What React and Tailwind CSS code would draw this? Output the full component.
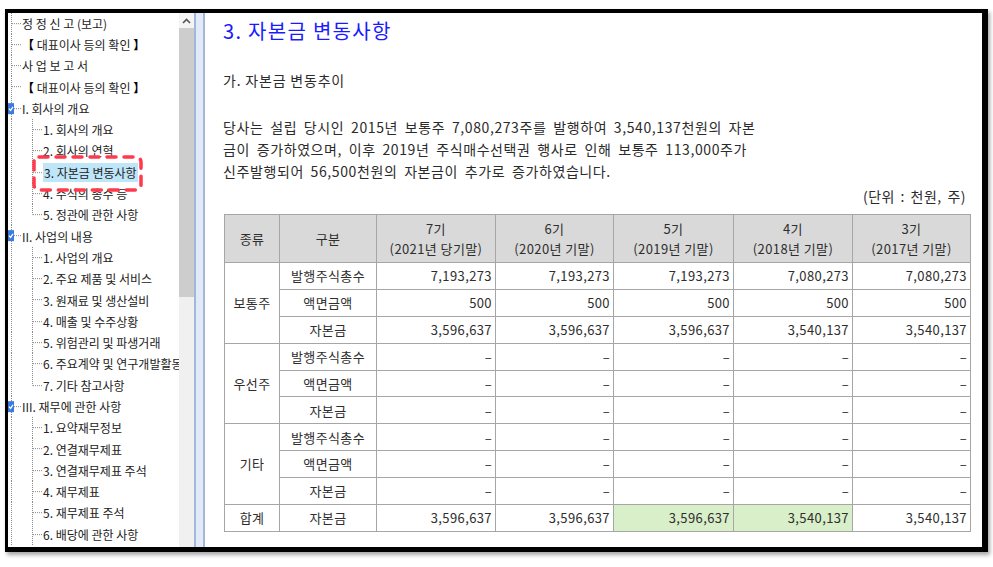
import React from 'react';

const FONT = '"Noto Sans CJK KR", "Noto Sans", sans-serif';

const tree = [
  { t: '정 정 신 고 (보고)', lv: 0 },
  { t: '대표이사 등의 확인', lv: 0, br: true },
  { t: '사 업 보 고 서', lv: 0 },
  { t: '대표이사 등의 확인', lv: 0, br: true },
  { t: 'I. 회사의 개요', lv: 0, chk: true },
  { t: '1. 회사의 개요', lv: 1 },
  { t: '2. 회사의 연혁', lv: 1 },
  { t: '3. 자본금 변동사항', lv: 1, sel: true },
  { t: '4. 주식의 총수 등', lv: 1 },
  { t: '5. 정관에 관한 사항', lv: 1, last: true },
  { t: 'II. 사업의 내용', lv: 0, chk: true },
  { t: '1. 사업의 개요', lv: 1 },
  { t: '2. 주요 제품 및 서비스', lv: 1 },
  { t: '3. 원재료 및 생산설비', lv: 1 },
  { t: '4. 매출 및 수주상황', lv: 1 },
  { t: '5. 위험관리 및 파생거래', lv: 1 },
  { t: '6. 주요계약 및 연구개발활동', lv: 1 },
  { t: '7. 기타 참고사항', lv: 1, last: true },
  { t: 'III. 재무에 관한 사항', lv: 0, chk: true },
  { t: '1. 요약재무정보', lv: 1 },
  { t: '2. 연결재무제표', lv: 1 },
  { t: '3. 연결재무제표 주석', lv: 1 },
  { t: '4. 재무제표', lv: 1 },
  { t: '5. 재무제표 주석', lv: 1 },
  { t: '6. 배당에 관한 사항', lv: 1 },
];

const ROW_H = 21.3;

function TreeRow({ item }) {
  const mid = ROW_H / 2;
  const w = item.lv ? 35 : 14;
  return (
    <div className="flex h-[21.3px] items-center whitespace-nowrap">
      <svg width={w} height={ROW_H} className="shrink-0">
        <g stroke="#8a8a8a" strokeWidth="1" strokeDasharray="1 1" fill="none">
          <line x1="3.5" y1="0" x2="3.5" y2={ROW_H} />
          {item.lv === 0 && <line x1="4" y1={mid} x2="14" y2={mid} />}
          {item.lv === 1 && (
            <>
              <line x1="24.5" y1="0" x2="24.5" y2={item.last ? mid : ROW_H} />
              <line x1="25" y1={mid} x2="35" y2={mid} />
            </>
          )}
        </g>
        {item.chk && (
          <g>
            <rect x="0" y={mid - 5.5} width="6" height="11" fill="#3b7be0" />
            <path d={`M1 ${mid} L2.6 ${mid + 1.8} L5 ${mid - 1.8}`} stroke="#fff" strokeWidth="1.2" fill="none" />
          </g>
        )}
      </svg>
      <span
        className={
          item.sel
            ? 'bg-[#bfe5f9] px-[1px] leading-[19px] text-[12px] text-[#222]'
            : 'text-[12px] leading-[19px] text-[#222]'
        }
      >
        {item.br ? (
          <>
            <b className="text-black">【</b> {item.t} <b className="text-black">】</b>
          </>
        ) : (
          item.t
        )}
      </span>
    </div>
  );
}

const periods = [
  ['7기', '(2021년 당기말)'],
  ['6기', '(2020년 기말)'],
  ['5기', '(2019년 기말)'],
  ['4기', '(2018년 기말)'],
  ['3기', '(2017년 기말)'],
];

const dash = ['–', '–', '–', '–', '–'];

const groups = [
  {
    name: '보통주',
    rows: [
      ['발행주식총수', ['7,193,273', '7,193,273', '7,193,273', '7,080,273', '7,080,273']],
      ['액면금액', ['500', '500', '500', '500', '500']],
      ['자본금', ['3,596,637', '3,596,637', '3,596,637', '3,540,137', '3,540,137']],
    ],
  },
  {
    name: '우선주',
    rows: [
      ['발행주식총수', dash],
      ['액면금액', dash],
      ['자본금', dash],
    ],
  },
  {
    name: '기타',
    rows: [
      ['발행주식총수', dash],
      ['액면금액', dash],
      ['자본금', dash],
    ],
  },
];

const totals = ['3,596,637', '3,596,637', '3,596,637', '3,540,137', '3,540,137'];

const td = 'border border-[#a6a6a6] px-[3px] text-[13px] tracking-[0.4px] text-[#2e2e2e]';

function CapitalTable() {
  return (
    <table className="w-[746px] table-fixed border-collapse border border-[#6f6f6f]">
      <colgroup>
        <col className="w-[55px]" />
        <col className="w-[97px]" />
        <col className="w-[119px]" />
        <col className="w-[118px]" />
        <col className="w-[120px]" />
        <col className="w-[119px]" />
        <col className="w-[118px]" />
      </colgroup>
      <thead>
        <tr className="h-[48px] bg-[#d9d9d9]">
          <th className={`${td} text-center font-normal`}>종류</th>
          <th className={`${td} text-center font-normal`}>구분</th>
          {periods.map(([a, b]) => (
            <th key={a} className={`${td} text-center font-normal leading-[20px]`}>
              {a}
              <br />
              {b}
            </th>
          ))}
        </tr>
      </thead>
      <tbody>
        {groups.map((g) =>
          g.rows.map(([label, vals], i) => (
            <tr key={g.name + i} className="h-[26.9px]">
              {i === 0 && (
                <td rowSpan={3} className={`${td} text-center`}>
                  {g.name}
                </td>
              )}
              <td className={`${td} text-center`}>{label}</td>
              {vals.map((v, j) => (
                <td key={j} className={`${td} text-right`}>
                  {v}
                </td>
              ))}
            </tr>
          ))
        )}
        <tr className="h-[26.9px]">
          <td className={`${td} text-center`}>합계</td>
          <td className={`${td} text-center`}>자본금</td>
          {totals.map((v, j) => (
            <td key={j} className={`${td} text-right ${j === 2 || j === 3 ? 'bg-[#d9efc9]' : ''}`}>
              {v}
            </td>
          ))}
        </tr>
      </tbody>
    </table>
  );
}

export default function App() {
  return (
    <div className="h-[567px] w-[993px] overflow-hidden bg-white" style={{ fontFamily: FONT }}>
      <div className="ml-[5px] mt-[9px] h-[543px] w-[983px] border-b-[5px] border-l-[3px] border-r-[6px] border-t-[4px] border-black shadow-[2px_3px_4px_rgba(0,0,0,0.35)]">
        <div className="flex h-full">
          {/* outline tree */}
          <div className="relative w-[171px] shrink-0 overflow-hidden bg-white">
            <div className="-mt-[0.5px]">
              {tree.map((item, i) => (
                <TreeRow key={i} item={item} />
              ))}
            </div>
            <svg className="absolute left-[24px] top-[142px]" width="112" height="38">
              <rect
                x="2"
                y="2"
                width="107"
                height="33"
                rx="5"
                fill="none"
                stroke="#ff3a4c"
                strokeWidth="3.5"
                strokeLinecap="round"
                strokeDasharray="9 8"
              />
            </svg>
          </div>

          {/* scrollbar */}
          <div className="flex w-[15px] shrink-0 flex-col bg-[#f0f0f0]">
            <div className="flex h-[15px] items-center justify-center bg-[#f4f4f4]">
              <svg width="9" height="6" viewBox="0 0 9 6">
                <path d="M1 5 L4.5 1.5 L8 5" stroke="#555" strokeWidth="1.6" fill="none" />
              </svg>
            </div>
            <div className="h-[269px] bg-[#cdcdcd]" />
            <div className="flex-1" />
          </div>

          {/* splitter */}
          <div className="w-[11px] shrink-0 border-l-2 border-r-2 border-[#a2b7dc] bg-[#e2e9f7]" />

          {/* document */}
          <div className="flex-1 bg-white pl-[18px] pt-[5px] text-[#2b2b2b]">
            <h1 className="text-[20px] font-normal leading-[26px] tracking-[1.3px] text-[#1a1aff]">3. 자본금 변동사항</h1>
            <p className="mt-[26px] text-[14px] leading-[20px] tracking-[0.8px]">가. 자본금 변동추이</p>
            <p className="mt-[26px] text-[14px] leading-[22px] tracking-[0.6px] [word-spacing:3px]">
              당사는 설립 당시인 2015년 보통주 7,080,273주를 발행하여 3,540,137천원의 자본
              <br />
              금이 증가하였으며, 이후 2019년 주식매수선택권 행사로 인해 보통주 113,000주가
              <br />
              신주발행되어 56,500천원의 자본금이 추가로 증가하였습니다.
            </p>
            <div className="mt-[4px] w-[743px] text-right text-[14px] leading-[20px] tracking-[0.5px] [word-spacing:2px]">
              (단위 : 천원, 주)
            </div>
            <div className="mt-[8px] pl-[1px]">
              <CapitalTable />
            </div>
          </div>
        </div>
      </div>
    </div>
  );
}
